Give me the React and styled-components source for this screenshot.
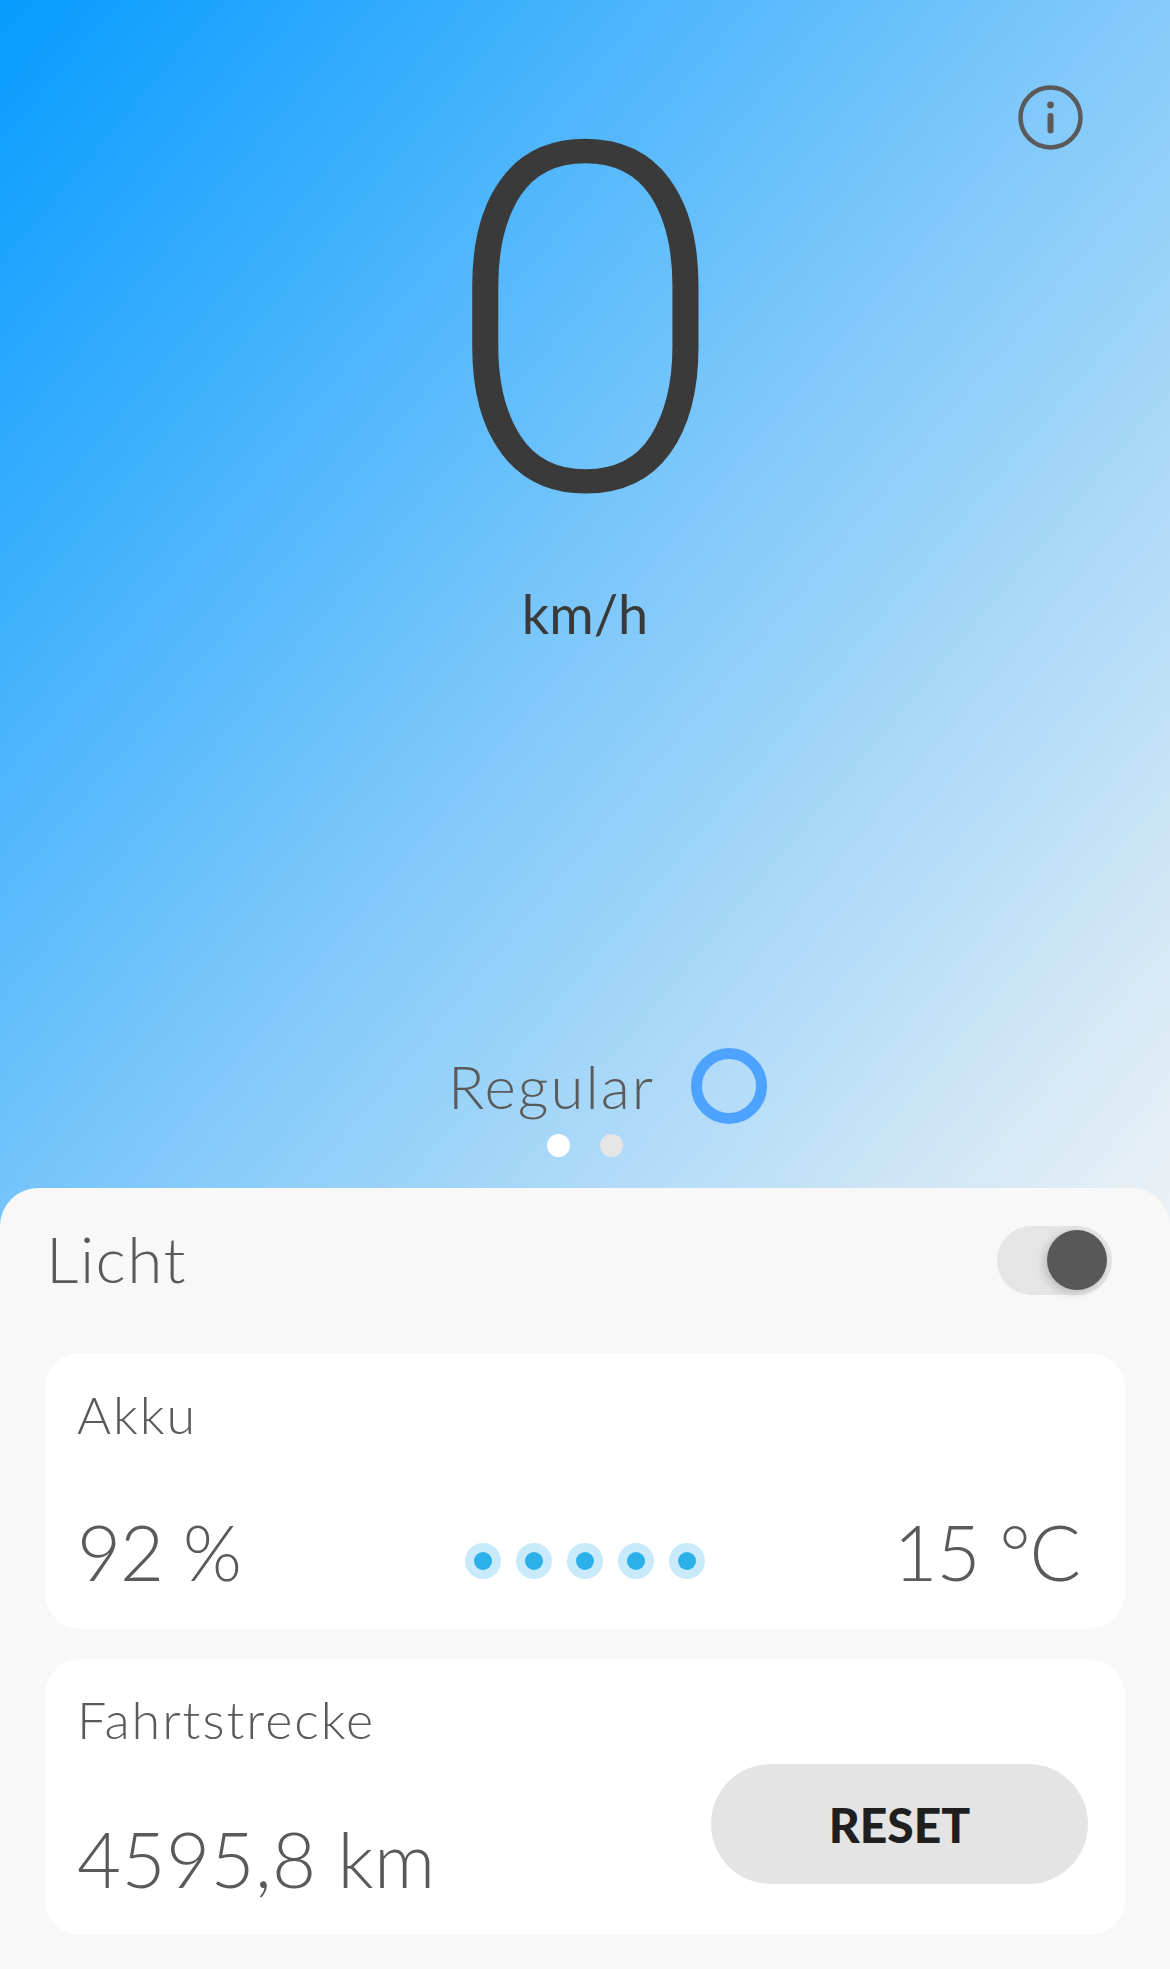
import React from "react";
import styled, { createGlobalStyle } from "styled-components";

const GlobalStyle = createGlobalStyle`
  html, body {
    margin: 0;
    padding: 0;
    background: #f8f8f8;
  }
  * {
    box-sizing: border-box;
  }
`;

const Page = styled.div`
  position: relative;
  width: 1170px;
  height: 1969px;
  overflow: hidden;
  font-family: "Lato", "Liberation Sans", sans-serif;
  font-weight: 300;
  color: #5a5a5a;
  background-color: #f8f8f8;
  background-image: linear-gradient(130deg, #069bff 0%, #7ec8fa 50%, #eef2f5 100%);
  background-size: 100% 1240px;
  background-repeat: no-repeat;
`;

const Hero = styled.section`
  height: 1188px;
  display: flex;
  flex-direction: column;
  align-items: center;
`;

const InfoButton = styled.button`
  position: absolute;
  top: 85px;
  left: 1018px;
  width: 65px;
  height: 65px;
  padding: 0;
  border: 0;
  background: none;
  color: #5a5a5a;
`;

const Speed = styled.div`
  margin-top: 78px;
  font-family: "Roboto", "Liberation Sans", sans-serif;
  font-weight: 260;
  font-size: 469px;
  line-height: 490px;
  color: #3a3a3a;
  -webkit-text-stroke: 12px #3a3a3a;
  transform: scaleX(1.07);
`;

const Unit = styled.div`
  margin-top: 16px;
  font-weight: 400;
  font-size: 54px;
  line-height: 60px;
  color: #3a3a3a;
`;

const ModeRow = styled.div`
  align-self: flex-start;
  margin-top: 404px;
  padding-left: 448px;
  display: flex;
  align-items: center;
  gap: 36px;
`;

const ModeLabel = styled.span`
  font-size: 60px;
  line-height: 76px;
  letter-spacing: 2px;
`;

const ModeRing = styled.span`
  width: 76px;
  height: 76px;
  border-radius: 50%;
  border: 11px solid #4da3ff;
`;

const Pager = styled.div`
  margin-top: 10px;
  display: flex;
  gap: 30px;
`;

const PagerDot = styled.span`
  width: 23px;
  height: 23px;
  border-radius: 50%;
  background: ${(p) => (p.$active ? "#ffffff" : "#e5e5e5")};
`;

const Sheet = styled.section`
  height: 781px;
  padding: 38px 45px 0;
  background: #f8f8f8;
  border-radius: 38px 38px 0 0;
`;

const LightRow = styled.div`
  height: 69px;
  padding: 0 13px 0 1px;
  display: flex;
  align-items: center;
  justify-content: space-between;
`;

const LightLabel = styled.span`
  font-size: 64px;
  line-height: 66px;
  letter-spacing: 1.5px;
  margin-bottom: 3px;
`;

const Toggle = styled.div`
  width: 115px;
  height: 69px;
  padding: 4px 5px;
  display: flex;
  justify-content: flex-end;
  border-radius: 35px;
  background: #e5e5e5;
`;

const ToggleKnob = styled.span`
  width: 60px;
  height: 60px;
  border-radius: 50%;
  background: #585858;
  box-shadow: -3px 3px 10px rgba(0, 0, 0, 0.18);
`;

const Card = styled.div`
  height: 276px;
  margin-top: ${(p) => p.$gap}px;
  padding: ${(p) => p.$top}px 32px 0;
  background: #ffffff;
  border-radius: 36px;
`;

const CardTitle = styled.div`
  font-size: 52px;
  line-height: 62px;
  letter-spacing: 2px;
`;

const BatteryRow = styled.div`
  margin-top: 62px;
  padding-right: 13px;
  display: grid;
  grid-template-columns: 1fr auto 1fr;
  align-items: center;
`;

const Value = styled.div`
  font-size: 76px;
  line-height: 90px;
  letter-spacing: -1px;
  text-align: ${(p) => p.$align || "left"};
`;

const CellRow = styled.div`
  display: flex;
  gap: 15px;
  margin-top: 18px;
  margin-right: -13px;
`;

const Cell = styled.span`
  width: 36px;
  height: 36px;
  border-radius: 50%;
  background: #c8eafa;
  display: flex;
  align-items: center;
  justify-content: center;
  &::after {
    content: "";
    width: 18px;
    height: 18px;
    border-radius: 50%;
    background: #2bb0ea;
  }
`;

const TripRow = styled.div`
  margin-top: 14px;
  display: flex;
  align-items: flex-start;
  justify-content: space-between;
`;

const TripValue = styled(Value)`
  margin-top: 50px;
  letter-spacing: 0.4px;
`;

const ResetButton = styled.button`
  width: 377px;
  height: 120px;
  margin-right: 5px;
  border: 0;
  border-radius: 60px;
  background: #e4e4e4;
  font-family: "Lato", "Liberation Sans", sans-serif;
  font-weight: 900;
  font-size: 48px;
  color: #1f1f1f;
`;

const InfoIcon = () => (
  <svg width="65" height="65" viewBox="0 0 65 65" fill="none" stroke="currentColor">
    <circle cx="32.5" cy="32.5" r="30" strokeWidth="4.5" />
    <circle cx="32.5" cy="20" r="3.4" fill="currentColor" stroke="none" />
    <line x1="32.5" y1="31" x2="32.5" y2="45.5" strokeWidth="6" strokeLinecap="round" />
  </svg>
);

const App = () => (
  <Page>
    <GlobalStyle />
    <Hero>
      <InfoButton aria-label="Info">
        <InfoIcon />
      </InfoButton>
      <Speed>0</Speed>
      <Unit>km/h</Unit>
      <ModeRow>
        <ModeLabel>Regular</ModeLabel>
        <ModeRing />
      </ModeRow>
      <Pager>
        <PagerDot $active />
        <PagerDot />
      </Pager>
    </Hero>
    <Sheet>
      <LightRow>
        <LightLabel>Licht</LightLabel>
        <Toggle>
          <ToggleKnob />
        </Toggle>
      </LightRow>
      <Card $gap={58} $top={30}>
        <CardTitle>Akku</CardTitle>
        <BatteryRow>
          <Value>92 %</Value>
          <CellRow>
            {[0, 1, 2, 3, 4].map((i) => (
              <Cell key={i} />
            ))}
          </CellRow>
          <Value $align="right">15 °C</Value>
        </BatteryRow>
      </Card>
      <Card $gap={30} $top={29}>
        <CardTitle>Fahrtstrecke</CardTitle>
        <TripRow>
          <TripValue>4595,8 km</TripValue>
          <ResetButton>RESET</ResetButton>
        </TripRow>
      </Card>
    </Sheet>
  </Page>
);

export default App;
